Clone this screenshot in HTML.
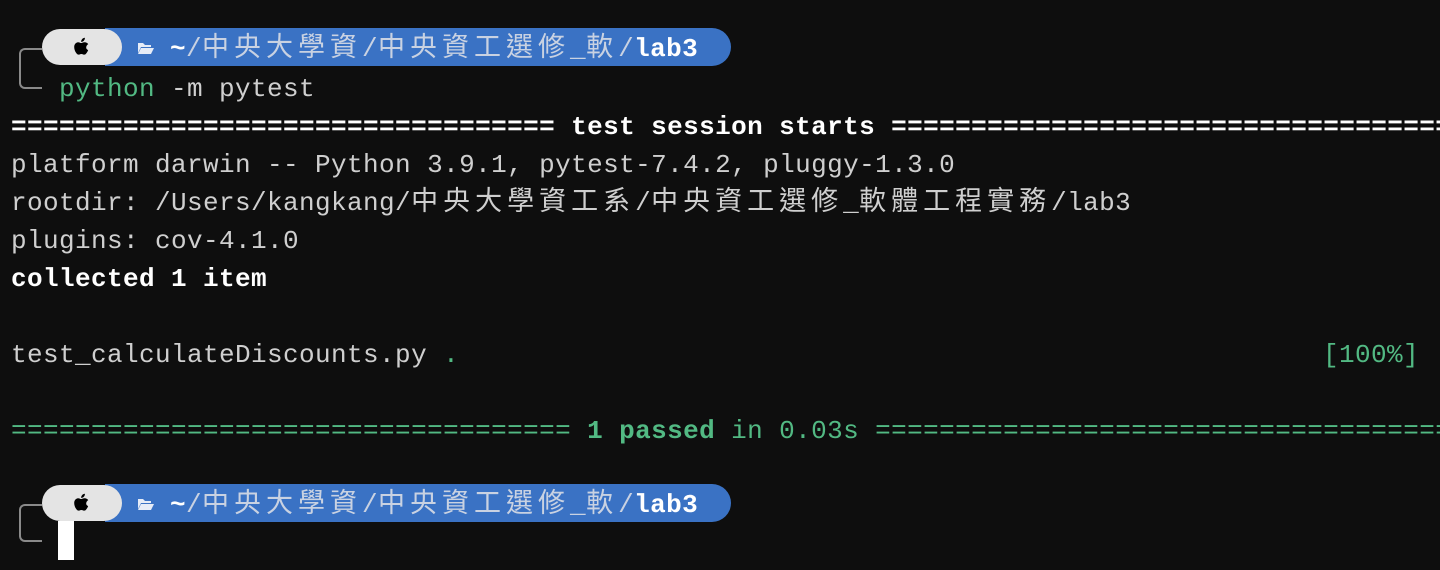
<!DOCTYPE html>
<html><head><meta charset="utf-8"><style>
html,body{margin:0;padding:0;background:#0e0e0e;width:1440px;height:570px;overflow:hidden}
.l{position:absolute;left:11px;white-space:pre;font-family:"Liberation Mono","Noto Sans CJK TC",monospace;font-size:26px;letter-spacing:0.4px;color:#cfcfcf;line-height:38px;height:38px}
.c{font-size:27px;letter-spacing:5px}
.b{font-weight:bold;color:#fff}
.g{color:#52b983}
.pill{position:absolute;left:42px;width:80px;height:36px;background:#e4e4e4;border-radius:18px}
.bar{position:absolute;left:105px;width:626px;height:38px;background:#3a72c4;border-radius:0 19px 19px 0}
.conn{position:absolute;left:19px;width:23px;height:38px;border:2px solid #8a8a8a;border-right:none;border-radius:6px 0 0 6px;box-sizing:border-box}
.pt{position:absolute;left:170px;white-space:pre;font-family:"Liberation Mono","Noto Sans CJK TC",monospace;font-size:26px;letter-spacing:0.4px;color:#c9d2e2;line-height:38px}
</style></head><body>
<div class="conn" style="top:48px;height:41px"></div>
<div class="bar" style="top:28px"></div>
<div class="pill" style="top:29px"></div>
<svg style="position:absolute;left:70px;top:35px" width="24" height="24" viewBox="0 0 20 20"><path d="M13.5 10.6c0-2 1.6-2.9 1.7-3-0.9-1.4-2.4-1.6-2.9-1.6-1.2-.1-2.4.7-3 .7s-1.6-.7-2.6-.7C5.300 6.100 3.500 7.300 3.500 10c0 1.700.6 3.400 1.400 4.600.7 1 1.300 1.800 2.200 1.800.9 0 1.200-.6 2.400-.6s1.400.6 2.400.6 1.600-.9 2.200-1.800c.7-1 1-2 1-2.100 0 0-1.600-.6-1.600-1.900zM11.600 4.700c.5-.6.900-1.500.8-2.400-.8 0-1.700.5-2.300 1.100-.5.600-.9 1.400-.8 2.300.9.1 1.700-.4 2.300-1z" fill="#000"/></svg>
<svg style="position:absolute;left:137px;top:40px" width="18" height="16" viewBox="0 0 18 16"><path d="M1 3h5l2 2h6v2H4L1 13z" fill="#e6ecf7"/><path d="M4 8h13l-3 6H1z" fill="#e6ecf7"/></svg>
<div class="pt" style="top:30px"><span class="b">~</span>/<span class="c">中央大學資</span>/<span class="c">中央資工選修</span>_<span class="c">軟</span>/<span class="b">lab3</span></div>
<div class="l" style="top:70px;left:59px"><span class="g">python</span> -m pytest</div>
<div class="l b" style="top:108px">==================================<span> test session starts </span>===================================</div>
<div class="l" style="top:146px">platform darwin -- Python 3.9.1, pytest-7.4.2, pluggy-1.3.0</div>
<div class="l" style="top:184px">rootdir: /Users/kangkang/<span class="c">中央大學資工系</span>/<span class="c">中央資工選修</span>_<span class="c">軟體工程實務</span>/lab3</div>
<div class="l" style="top:222px">plugins: cov-4.1.0</div>
<div class="l b" style="top:260px">collected 1 item</div>
<div class="l" style="top:336px">test_calculateDiscounts.py <span class="g">.</span></div>
<div class="l g" style="top:336px;left:1323px">[100%]</div>
<div class="l g" style="top:412px">=================================== <b>1 passed</b> in 0.03s ====================================</div>
<div class="conn" style="top:504px"></div>
<div class="bar" style="top:484px"></div>
<div class="pill" style="top:485px"></div>
<svg style="position:absolute;left:70px;top:491px" width="24" height="24" viewBox="0 0 20 20"><path d="M13.5 10.6c0-2 1.6-2.9 1.7-3-0.9-1.4-2.4-1.6-2.9-1.6-1.2-.1-2.4.7-3 .7s-1.6-.7-2.6-.7C5.300 6.100 3.500 7.300 3.500 10c0 1.700.6 3.400 1.400 4.600.7 1 1.300 1.800 2.200 1.800.9 0 1.200-.6 2.400-.6s1.400.6 2.400.6 1.600-.9 2.200-1.800c.7-1 1-2 1-2.100 0 0-1.600-.6-1.600-1.900zM11.600 4.700c.5-.6.900-1.500.8-2.400-.8 0-1.700.5-2.300 1.100-.5.600-.9 1.400-.8 2.300.9.1 1.700-.4 2.300-1z" fill="#000"/></svg>
<svg style="position:absolute;left:137px;top:496px" width="18" height="16" viewBox="0 0 18 16"><path d="M1 3h5l2 2h6v2H4L1 13z" fill="#e6ecf7"/><path d="M4 8h13l-3 6H1z" fill="#e6ecf7"/></svg>
<div class="pt" style="top:486px"><span class="b">~</span>/<span class="c">中央大學資</span>/<span class="c">中央資工選修</span>_<span class="c">軟</span>/<span class="b">lab3</span></div>
<div style="position:absolute;left:58px;top:521px;width:16px;height:39px;background:#fff"></div>
</body></html>
